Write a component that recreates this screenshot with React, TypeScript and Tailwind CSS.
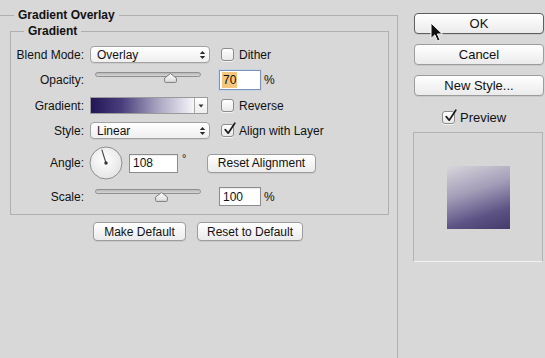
import React from "react";

function Checkbox({ checked }: { checked?: boolean }) {
  return (
    <div className="relative w-[13px] h-[13px] shrink-0 rounded-[3px] border border-[#8c8c8c] bg-linear-to-b from-white to-[#e9e9e9] shadow-[0_1px_0_rgba(255,255,255,0.7)]">
      {checked && (
        <svg className="absolute left-[1px] top-[-3px]" width="14" height="14" viewBox="0 0 14 14">
          <path d="M2.2 7.6 L5.2 11.2 L11.8 1.2" fill="none" stroke="#1c1c1c" strokeWidth="1.7" strokeLinecap="round" strokeLinejoin="round" />
        </svg>
      )}
    </div>
  );
}

function UpDown() {
  return (
    <svg width="7" height="10" viewBox="0 0 7 10">
      <path d="M0.8 4 L3.5 1 L6.2 4 Z" fill="#2a2a2a" />
      <path d="M0.8 6 L3.5 9 L6.2 6 Z" fill="#2a2a2a" />
    </svg>
  );
}

function Select({ value }: { value: string }) {
  return (
    <div className="ml-[6px] flex h-[17px] w-[120px] items-center justify-between rounded-[4px] border border-[#a2a2a2] bg-linear-to-b from-white to-[#efefef] pl-[6px] pr-[3px] text-[12px] leading-none shadow-[0_1px_0_rgba(0,0,0,0.06)]">
      <span>{value}</span>
      <UpDown />
    </div>
  );
}

function Thumb({ left }: { left: string }) {
  return (
    <svg className={"absolute " + left} width="13" height="10" viewBox="0 0 13 10">
      <defs>
        <linearGradient id="tg" x1="0" y1="0" x2="0" y2="1">
          <stop offset="0" stopColor="#ffffff" />
          <stop offset="1" stopColor="#d9d9d9" />
        </linearGradient>
      </defs>
      <path d="M6.5 0.6 L12.4 5 V8.6 Q12.4 9.4 11.6 9.4 H1.4 Q0.6 9.4 0.6 8.6 V5 Z" fill="url(#tg)" stroke="#7d7d7d" strokeWidth="1" />
    </svg>
  );
}

function Slider({ thumb }: { thumb: "op" | "sc" }) {
  return (
    <div className="relative ml-[6px] h-full w-[120px]">
      <div className="absolute left-[5px] top-[2px] h-[5px] w-[106px] rounded-full border border-[#8f8f8f] bg-linear-to-b from-[#b8b8b8] to-[#d6d6d6]" />
      {thumb === "op" ? <Thumb left="left-[74px] top-[3px]" /> : <Thumb left="left-[65px] top-[5px]" />}
    </div>
  );
}

function Label({ children }: { children: React.ReactNode }) {
  return <div className="w-[73px] shrink-0 text-right text-[12px] leading-none">{children}</div>;
}

function Btn({ children, className }: { children: React.ReactNode; className: string }) {
  return (
    <div
      className={
        "flex items-center justify-center rounded-[4px] border bg-linear-to-b from-white to-[#ebebeb] leading-none text-[#111] shadow-[0_1px_0_rgba(0,0,0,0.07)] " +
        className
      }
    >
      {children}
    </div>
  );
}

export default function App() {
  return (
    <div className="relative flex h-[358px] w-[545px] overflow-hidden bg-[#d8d8d8] text-[#111] [font-family:Liberation_Sans,Arial,sans-serif]">
      {/* Left panel */}
      <div className="w-[398px] shrink-0 pt-[8px]">
        <fieldset className="h-[360px] border-t border-r border-[#b0b0b0]">
          <legend className="ml-[14px] h-[14px] px-[4px] text-[12px] font-bold leading-[14px]">Gradient Overlay</legend>
          <fieldset className="ml-[10px] mt-[2px] w-[379px] border border-[#b0b0b0] pb-[8px]">
            <legend className="ml-[13px] h-[14px] px-[4px] text-[12px] font-bold leading-[14px]">Gradient</legend>

            {/* Blend Mode */}
            <div className="mt-[8px] flex h-[17px] items-center">
              <Label>Blend Mode:</Label>
              <Select value="Overlay" />
              <div className="ml-[11px]">
                <Checkbox />
              </div>
              <span className="ml-[5px] text-[12px] leading-none">Dither</span>
            </div>

            {/* Opacity */}
            <div className="mt-[7px] flex h-[20px] items-center">
              <Label>Opacity:</Label>
              <Slider thumb="op" />
              <div className="ml-[9px] flex h-[20px] w-[42px] items-center border border-[#7f92b8] bg-white pl-[2px] text-[12px] leading-none shadow-[0_0_0_1px_#c6d2e8]">
                <span className="bg-[#f5c77e] px-[1px] py-[2px]">70</span>
              </div>
              <span className="ml-[3px] text-[12px] leading-none">%</span>
            </div>

            {/* Gradient */}
            <div className="mt-[7px] flex h-[17px] items-center">
              <Label>Gradient:</Label>
              <div className="ml-[6px] flex h-[17px] w-[118px] border border-[#9a9a9a] bg-white">
                <div className="flex-1 bg-[linear-gradient(to_right,#221557,#4a3f7c_30%,#a9a4c2_65%,#f6f6fa)]" />
                <div className="flex w-[13px] items-center justify-center border-l border-[#a8a8a8] bg-linear-to-b from-white to-[#ededed]">
                  <svg width="6" height="4" viewBox="0 0 6 4">
                    <path d="M0.5 0.5 L3 3.5 L5.5 0.5 Z" fill="#333" />
                  </svg>
                </div>
              </div>
              <div className="ml-[13px]">
                <Checkbox />
              </div>
              <span className="ml-[5px] text-[12px] leading-none">Reverse</span>
            </div>

            {/* Style */}
            <div className="mt-[8px] flex h-[17px] items-center">
              <Label>Style:</Label>
              <Select value="Linear" />
              <div className="ml-[11px]">
                <Checkbox checked />
              </div>
              <span className="ml-[5px] text-[12px] leading-none">Align with Layer</span>
            </div>

            {/* Angle */}
            <div className="mt-[7px] flex h-[34px] items-center">
              <Label>Angle:</Label>
              <svg className="ml-[5px]" width="34" height="34" viewBox="0 0 34 34">
                <defs>
                  <radialGradient id="dial" cx="0.45" cy="0.4" r="0.65">
                    <stop offset="0" stopColor="#ffffff" />
                    <stop offset="1" stopColor="#e2e2e2" />
                  </radialGradient>
                </defs>
                <circle cx="17" cy="17" r="16" fill="url(#dial)" stroke="#8d8d8d" strokeWidth="1" />
                <line x1="17" y1="17" x2="12.8" y2="3.6" stroke="#444" strokeWidth="1.1" />
                <circle cx="17" cy="17" r="1.7" fill="#333" />
              </svg>
              <div className="ml-[6px] flex h-[19px] w-[49px] items-center border border-[#8c8c8c] bg-white pl-[3px] text-[12px] leading-none shadow-[inset_0_1px_1px_rgba(0,0,0,0.08)]">
                108
              </div>
              <div className="w-[29px] self-start pl-[4px] pt-[7px] text-[11px] leading-none">°</div>
              <Btn className="h-[19px] w-[109px] border-[#9c9c9c] text-[12px]">Reset Alignment</Btn>
            </div>

            {/* Scale */}
            <div className="mt-[7px] flex h-[19px] items-center">
              <Label>Scale:</Label>
              <Slider thumb="sc" />
              <div className="ml-[9px] flex h-[19px] w-[42px] items-center border border-[#8c8c8c] bg-white pl-[3px] text-[12px] leading-none shadow-[inset_0_1px_1px_rgba(0,0,0,0.08)]">
                100
              </div>
              <span className="ml-[3px] text-[12px] leading-none">%</span>
            </div>
          </fieldset>

          {/* Bottom buttons */}
          <div className="ml-[93px] mt-[7px] flex gap-[11px]">
            <Btn className="h-[19px] w-[93px] border-[#9c9c9c] text-[12px]">Make Default</Btn>
            <Btn className="h-[19px] w-[106px] border-[#9c9c9c] text-[12px]">Reset to Default</Btn>
          </div>
        </fieldset>
      </div>

      {/* Right panel */}
      <div className="flex flex-col pl-[16px]">
        <Btn className="mt-[13px] h-[21px] w-[130px] border-[#5f5f5f] text-[13px] shadow-[0_0_0_0.5px_#777]">OK</Btn>
        <Btn className="mt-[10px] h-[21px] w-[130px] border-[#9c9c9c] text-[13px]">Cancel</Btn>
        <Btn className="mt-[10px] h-[21px] w-[130px] border-[#9c9c9c] text-[13px]">New Style...</Btn>
        <div className="mt-[14px] flex h-[14px] items-center pl-[28px]">
          <Checkbox checked />
          <span className="ml-[5px] text-[13px] leading-none">Preview</span>
        </div>
        <div className="-ml-px mt-[8px] flex h-[130px] w-[130px] items-center justify-center border border-[#b3b3b3] border-b-[#f2f2f2] bg-[#d6d6d6]">
          <div className="h-[63px] w-[63px] bg-[linear-gradient(162deg,#d8d6dc_0%,#a39db8_40%,#5c5284_75%,#453a6b_100%)]" />
        </div>
      </div>

      {/* Mouse cursor */}
      <svg className="absolute left-[430px] top-[22px]" width="14" height="21" viewBox="0 0 14 21">
        <path d="M1 1 L1 16.5 L4.8 12.9 L7.6 19.2 L10.1 18.1 L7.4 12 L12.4 12 Z" fill="#111" stroke="#fff" strokeWidth="1" strokeLinejoin="round" />
      </svg>
    </div>
  );
}
